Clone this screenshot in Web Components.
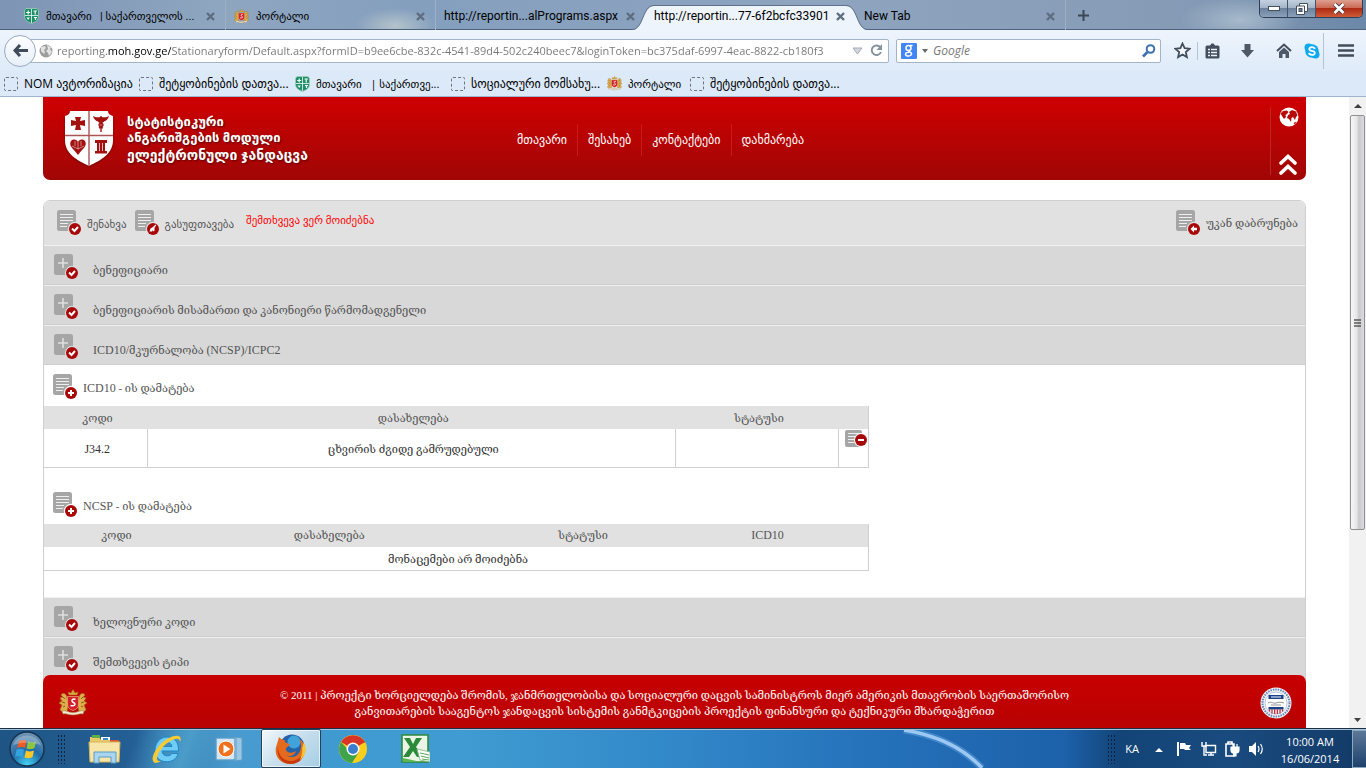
<!DOCTYPE html>
<html lang="ka">
<head>
<meta charset="utf-8">
<title>ელექტრონული ჯანდაცვა</title>
<style>
html, body { height: 100%; }
body { margin: 0; overflow: hidden; background: #fff; font-family: "Open Sans", "DejaVu Sans", sans-serif; }
</style>
</head>
<body>
<desktop-view></desktop-view>
<script>
const define = (name, render) => customElements.define(name, class extends HTMLElement {
  connectedCallback() {
    if (this.shadowRoot) return;
    this.attachShadow({ mode: "open" });
    const t = document.createElement("template");
    t.innerHTML = "<style>*{box-sizing:border-box}:host{box-sizing:border-box}a{color:inherit;text-decoration:none}button{font:inherit;color:inherit;background:none;border:0;padding:0;margin:0;white-space:nowrap}svg{display:block;flex:none}</style>" + render(this);
    this.shadowRoot.append(t.content.cloneNode(true));
  }
});

/* ---- shared pictograms ---- */
const shield = (a, b) => `<svg width="15" height="16" viewBox="0 0 15 16"><path d="M2 .5h11L14.500 2.500V8c0 4-3 6-7 7.500C3.500 14 .5 12 .5 8V2.500z" fill="${a}" stroke="#9fd0bb" stroke-width=".8"/><path d="M7.500 1v14M1 7.500h13" stroke="${b}" stroke-width=".8"/><path d="M4.200 2.500v4M2.200 4.500h4M9.500 3h3.500M11.200 3v3.500M10 9.500h3M11.500 9.500V12" stroke="${b}" stroke-width="1.200"/><path d="M2.500 9.500l1.700 2.500 1.600-2.500z" fill="${b}"/></svg>`;
const emblem = (w) => `<svg width="${w}" height="${w}" viewBox="0 0 28 28"><path d="M10 6L9 3l3 1 2-3.500L16 4l3-1-1 3z" fill="#d9a93c" stroke="#a5731f" stroke-width=".5"/><path d="M8 9C8 5 4 3 2 6l2 2-3 1 2 3-3 2 3 2-2 5 3 2h4l1-6zM20 9c0-4 4-6 6-3l-2 2 3 1-2 3 3 2-3 2 2 5-3 2h-4l-1-6z" fill="#dfae4b" stroke="#a5731f" stroke-width=".7"/><path d="M4 8l2 2M3 13l3 1M4 18l2-1M24 8l-2 2M25 13l-3 1M24 18l-2-1" stroke="#8b5c18"/><path d="M8.500 7.500h11V16c0 3-2.500 4.500-5.500 5.500-3-1-5.500-2.500-5.500-5.500z" fill="#d3202b" stroke="#f0d48a" stroke-width=".6"/><path d="M16.500 10.500c-3-1.500-5 1.500-2 3s1 4-3 3" stroke="#fff" stroke-width="1.500" fill="none"/><path d="M3 22c4-1 6 1.500 11 1.500S21 21 25 22l-1 3c-4-1-5 1-10 1s-6-2-10-1z" fill="#f1ebda" stroke="#a8843e" stroke-width=".6"/></svg>`;

define("desktop-view", () => `
<style>:host{display:grid;grid-template-rows:auto minmax(0,1fr) 40px;height:100vh}
.view{display:flex;min-height:0}site-page{flex:1;min-width:0}</style>
<browser-chrome></browser-chrome>
<div class="view"><site-page></site-page><side-scroll></side-scroll></div>
<task-bar></task-bar>`);

/* ---- browser window ---- */
define("browser-chrome", () => `
<style>:host{display:block;font-size:12px;color:#000}</style>
<tab-strip></tab-strip><nav-bar></nav-bar><bookmark-bar></bookmark-bar>`);

define("browser-tab", () => `
<style>:host{display:flex;align-items:center;width:210px;height:30px;padding:2px 10px 0 8px;gap:7px;font:12px Roboto,"DejaVu Sans",sans-serif;white-space:pre;position:relative;border-left:1px solid #9fb0c4}
:host([active]),:host([after]),:host([first]){border-left-color:transparent}
:host([titled]){font-size:11px}
.shape{display:none;position:absolute;left:-14px;top:5px;width:236px;height:25px}
:host([active]) .shape{display:block}
span,button{position:relative}span{flex:1;min-width:0}</style>
<svg class="shape" viewBox="0 0 236 25" preserveAspectRatio="none"><path d="M0 25C12 25 10 1 22 1h192c12 0 10 24 22 24z" fill="#eef4fb"/><path d="M0 24.500C12 24.500 10 .5 22 .5h192c12 0 10 24 22 24" fill="none" stroke="#5d7189"/></svg>
<slot name="icon"></slot><span><slot></slot></span>
<button aria-label="Close tab"><svg width="9" height="9" viewBox="0 0 9 9"><path d="M1 1l7 7M8 1L1 8" stroke="#5e6d80" stroke-width="2.400"/></svg></button>`);

define("tab-strip", () => `
<style>:host{display:flex;justify-content:space-between;height:30px;border-bottom:1px solid #4c627c;background:radial-gradient(ellipse 40px 18px at 395px 26px,#b3c3ca 0,transparent 100%),radial-gradient(ellipse 60px 24px at 1240px 20px,#a7bacb,transparent),linear-gradient(90deg,#7d94b5 0,#8fa6c0 16%,#849fbe 30%,#8ea4bf 60%,#869bb6 86%,#6c88a8 100%)}
.tabs{display:flex;padding-left:15px}
.new{width:36px;height:30px;display:grid;place-items:center;border-left:1px solid #9fb0c4}
.win{display:flex;height:18px;margin-right:3px;border:1px solid #2e4056;border-top:0;border-radius:0 0 5px 5px;overflow:hidden}
.win button{display:grid;place-items:center;width:28px;background:linear-gradient(#c3d0df,#a5b5c9 45%,#6c819d 50%,#8ba1ba);border-right:1px solid #42556e}
.win .x{width:46px;border:0;background:linear-gradient(#dd9f90,#cc6a55 45%,#ae2a14 50%,#cf5c39)}</style>
<div class="tabs">
<browser-tab first titled><span slot="icon">${shield("#1f8f6a", "#f3fbf7")}</span>მთავარი   | საქართველოს ...</browser-tab>
<browser-tab titled><span slot="icon">${emblem(15)}</span>პორტალი</browser-tab>
<browser-tab>http://reportin...alPrograms.aspx</browser-tab>
<browser-tab active>http://reportin...77-6f2bcfc33901</browser-tab>
<browser-tab after>New Tab</browser-tab>
<button class="new" aria-label="New tab"><svg width="11" height="11" viewBox="0 0 11 11"><path d="M5.500 0v11M0 5.500h11" stroke="#3b4756" stroke-width="2"/></svg></button>
</div>
<div class="win"><button aria-label="Minimize"><svg width="12" height="5" viewBox="0 0 12 5"><rect x=".5" y=".5" width="11" height="4" fill="#fff" stroke="#45505f"/></svg></button><button aria-label="Restore"><svg width="12" height="12" viewBox="0 0 12 12"><path d="M3.500 3V.5h8v8H9" fill="#fff" stroke="#45505f"/><path d="M.5 3h8v8.500h-8z" fill="#fff" stroke="#45505f"/><rect x="3" y="5.500" width="3" height="3" fill="#6c819d" stroke="#45505f"/></svg></button><button class="x" aria-label="Close"><svg width="12" height="11" viewBox="0 0 12 11"><path d="M1.500 1l9 9M10.500 1l-9 9" stroke="#4a3a44" stroke-width="4.400"/><path d="M1.500 1l9 9M10.500 1l-9 9" stroke="#fff" stroke-width="2.600"/></svg></button></div>`);

define("nav-bar", () => `
<style>:host{display:flex;align-items:center;height:41px;padding:0 12px 0 4px;background:linear-gradient(#eef4fc,#deebf9)}
.back{width:32px;height:32px;border-radius:50%;border:1px solid #98abc3;background:linear-gradient(#fcfdff,#e8f0f9);display:grid;place-items:center;margin-right:-14px;z-index:1;flex:none}
.url,.find{display:flex;align-items:center;height:24px;border:1px solid #a3b4c9;background:#fff;border-radius:2px}
.url{flex:1;padding:0 5px 0 16px;gap:4px;min-width:0}
input{border:0;outline:0;padding:0;flex:1;min-width:0;font:12px "Open Sans",sans-serif;background:none;height:20px}
.url input{font-size:11px;-webkit-text-fill-color:transparent;background:linear-gradient(90deg,#757575 51px,#000 51px,#000 114px,#757575 114px);-webkit-background-clip:text;background-clip:text}
.find{width:265px;margin:0 13px 0 7px;padding:0 4px;gap:5px}
.find input{font-style:italic;color:#666}input::placeholder{color:#777;opacity:1}
.tools{display:flex;align-items:center}
i{width:1px;background:#b4c4d8}</style>
<button class="back" aria-label="Back"><svg width="15" height="13" viewBox="0 0 15 13"><path d="M7 1L2 6.500 7 12M2 6.500h13" fill="none" stroke="#3f4b5a" stroke-width="3"/></svg></button>
<div class="url"><svg width="14" height="14" viewBox="0 0 14 14"><circle cx="7" cy="7" r="6.500" fill="#9d9d9d"/><path d="M2 3l4-1 1 2-2 2 1 2-1 2-3-3zM8 1l4 2-1 2 2 3-3 4-1-3-2-2 2-2z" fill="#e2e2e2"/></svg>
<input aria-label="Address" value="reporting.moh.gov.ge/Stationaryform/Default.aspx?formID=b9ee6cbe-832c-4541-89d4-502c240beec7&amp;loginToken=bc375daf-6997-4eac-8822-cb180f3">
<svg width="11" height="8" viewBox="0 0 11 8"><path d="M1 1h9L5.500 7z" fill="#d4d8de" stroke="#a2a9b3"/></svg>
<button aria-label="Reload" style="margin-left:3px"><svg width="13" height="13" viewBox="0 0 13 13"><path d="M10.500 3.500A4.800 4.800 0 1 0 11 8" fill="none" stroke="#8792a0" stroke-width="2"/><path d="M12 0v6H6.500z" fill="#8792a0"/></svg></button></div>
<div class="find"><svg width="16" height="16" viewBox="0 0 16 16"><rect width="16" height="16" rx="1" fill="#4285f4"/><g fill="none" stroke="#fff" stroke-width="1.500"><circle cx="7.500" cy="5" r="2.500"/><path d="M9 2.500h2.500M8 7.500c-1 1 2 1.500 2.500 3 .5 3-6 3.500-6 .8 0-2 2-2 4-2"/></g></svg>
<svg width="6" height="4" viewBox="0 0 6 4"><path d="M0 0h6L3 4z" fill="#6a6a6a"/></svg>
<input aria-label="Search" placeholder="Google"><svg width="14" height="14" viewBox="0 0 14 14"><circle cx="8.500" cy="5" r="3.800" fill="none" stroke="#3c72b0" stroke-width="2"/><path d="M5.500 8L1 12.500" stroke="#3c72b0" stroke-width="2.600"/></svg></div>
<div class="tools">
<button aria-label="Bookmark"><svg width="17" height="17" viewBox="0 0 17 17"><path d="M8.500 1.500l2.100 4.700 5 .5-3.800 3.400 1.100 5-4.400-2.600-4.400 2.600 1.100-5L1.400 6.700l5-.5z" fill="#f4f8fc" stroke="#424e5c" stroke-width="1.800"/></svg></button>
<i style="height:18px;margin:0 7px 0 6px"></i>
<button aria-label="Bookmarks list"><svg width="15" height="16" viewBox="0 0 15 16"><path d="M2 2.500h3L6.500.5h2L10 2.500h3q1.500 0 1.500 1.500v10q0 1.500-1.500 1.500H2Q.5 15.500.5 14V4Q.5 2.500 2 2.500z" fill="#424e5c"/><path d="M3 6.500h2M6 6.500h6M3 9.500h2M6 9.500h6M3 12.500h2M6 12.500h6" stroke="#e8f0f9" stroke-width="1.600"/></svg></button>
<button aria-label="Downloads" style="margin-left:20px"><svg width="15" height="15" viewBox="0 0 15 15"><path d="M4.500 1h6v6H14l-6.500 7.500L1 7h3.500z" fill="#4d5967"/></svg></button>
<button aria-label="Home" style="margin-left:21px"><svg width="16" height="15" viewBox="0 0 16 15"><path d="M1 8l7-6.500L15 8" fill="none" stroke="#424e5c" stroke-width="2"/><path d="M3 9l5-4.500L13 9v6h-3.500v-4h-3v4H3z" fill="#4d5967"/></svg></button>
<button aria-label="Skype" style="margin-left:12px"><svg width="16" height="16" viewBox="0 0 16 16"><circle cx="8" cy="8" r="6.800" fill="#0eaaf0"/><circle cx="4.500" cy="4.500" r="4" fill="#0eaaf0"/><circle cx="11.500" cy="11.500" r="4" fill="#0eaaf0"/><path d="M10.800 6c-.6-2.500-5.600-2.400-5.500.2.100 2.400 5.500 1 5.500 3.700 0 2.700-5.500 2.500-5.700 0" fill="none" stroke="#fff" stroke-width="1.800"/></svg></button>
<i style="height:36px;margin:0 14px 0 3px"></i>
<button aria-label="Menu"><svg width="16" height="13" viewBox="0 0 16 13"><path d="M0 1.500h16M0 6.500h16M0 11.500h16" stroke="#424e5c" stroke-width="2.600"/></svg></button></div>`);

define("book-mark", () => `
<style>:host{display:block}:host([titled]){font-size:11px}a{display:flex;align-items:center;gap:6px;white-space:pre}
.blank{width:14px;height:14px;border:1px dashed #70757c;border-radius:2px}</style>
<a href="#"><slot name="icon"><i class="blank"></i></slot><slot></slot></a>`);

define("bookmark-bar", () => `
<style>:host{display:grid;grid-template-columns:135px 156px 156px 156px 83px 1fr;align-items:center;height:26px;padding-left:4px;font-size:12px;background:#dbe9f8;border-bottom:1px solid #9fb4cf}</style>
<book-mark>NOM ავტორიზაცია</book-mark><book-mark>შეტყობინების დათვა...</book-mark>
<book-mark titled><span slot="icon">${shield("#1f8f6a", "#f3fbf7")}</span>მთავარი   | საქართვე...</book-mark>
<book-mark>სოციალური მომსახუ...</book-mark><book-mark titled><span slot="icon">${emblem(15)}</span>პორტალი</book-mark><book-mark>შეტყობინების დათვა...</book-mark>`);

/* ---- web page ---- */
define("site-page", () => `
<style>:host{display:flex;flex-direction:column;padding:0 43px;background:#fff;font-family:"Liberation Serif","DejaVu Serif",serif;font-size:11px;color:#545454;overflow:hidden}
form-panel{flex:1;min-height:0;margin:20px 0 -6px}</style>
<site-header></site-header><form-panel></form-panel><site-footer></site-footer>`);

define("site-header", () => `
<style>:host{display:grid;grid-template-columns:464px 1fr auto;height:83px;flex:none;background:linear-gradient(#cf0000,#a00606);border-radius:0 0 7px 7px;color:#fff;font-family:"DejaVu Sans",sans-serif}
.brand{display:flex;padding:13px 0 0 21px;gap:13px;font-weight:bold;font-family:"Open Sans","DejaVu Sans",sans-serif;font-size:13px;line-height:16px;text-shadow:1px 1px 2px #5a0000;white-space:nowrap}
.brand div{padding-top:3px}
.brand b{display:block;font-size:14px;line-height:20px}
.brand svg{filter:drop-shadow(0 1px 1px #700)}
nav{display:flex;align-items:center;padding-top:2px;font-family:"Open Sans","DejaVu Sans",sans-serif;font-size:12px}
nav a{padding:0 10px;line-height:32px;border-left:1px solid #c81c1c;white-space:nowrap}nav a:first-child{border:0}
.side{width:36px;margin-top:10px;height:68px;display:flex;flex-direction:column;align-items:center;justify-content:space-between;border-left:1px solid #b92828}</style>
<div class="brand"><svg width="50" height="56" viewBox="0 0 50 56"><path d="M6 1h38c0 3 2 4 5 5v24c0 14-12 20-24 26C13 50 1 44 1 30V6c3-1 5-2 5-5z" fill="#fff"/><path d="M25 1v55M1 25.500h48" stroke="#a55" stroke-width="1.400"/><path d="M11 7h6l-1 4 5-1v6l-5-1 1 5h-6l1-5-5 1v-6l5 1z" fill="#a31010"/><path d="M29 6c3 2 5 1 8 1s5 1 8-1c-1 4-4 6-6 5h-4c-2 1-5-1-6-5z" fill="#a31010"/><path d="M37 6v16M34 11c7 3 6 5 1 7M40 11c-7 3-6 5-1 7" stroke="#a31010" fill="none" stroke-width="1.400"/><path d="M7 31c3-3 6-1 7 1 1-2 4-4 7-1 3 5-3 8-7 14-4-6-10-9-7-14z" fill="#a31010"/><path d="M8 36l6 3 6-3M11 31v5M17 31v5M14 32v7" stroke="#fff" fill="none" stroke-width=".5"/><path d="M31 30h12v3H31zM33 33h8v8h-8zM31 41h12v2.500H31z" fill="#a31010"/><path d="M35.500 33v8M38.500 33v8" stroke="#fff" stroke-width=".7"/></svg>
<div>სტატისტიკური<br>ანგარიშგების მოდული<b>ელექტრონული ჯანდაცვა</b></div></div>
<nav><a href="#">მთავარი</a><a href="#">შესახებ</a><a href="#">კონტაქტები</a><a href="#">დახმარება</a></nav>
<div class="side"><a href="#" aria-label="Language"><svg width="20" height="20" viewBox="0 0 20 20"><circle cx="10" cy="10" r="9.500" fill="#fff"/><path d="M1.500 6.500L4 4l4-.5 1.500 1.500L8 7l-1.500 1L7 10l-2 2-2-3zM9 8l2-1-1-2 3-2 4 1.500 1.500 4L17 10l-1 3-2-3-1.500 1-.5 4-2-3-2-1zM14.500 16l3-1.500-1.500 3z" fill="#b50b0b"/></svg></a>
<a href="#" aria-label="Up"><svg width="20" height="21" viewBox="0 0 20 21"><path d="M2 9l7-6.500L16 9M2 19l7-6.500 7 6.500" fill="none" stroke="#fff" stroke-width="3.600" stroke-linecap="round"/></svg></a></div>`);

const badges = {
  check: '<path d="M15 18.500l2.500 2.500 3.500-4" stroke="#fff" stroke-width="2" fill="none"/>',
  plus: '<path d="M18 16v6M15 19h6" stroke="#fff" stroke-width="2"/>',
  minus: '<path d="M15 19h6" stroke="#fff" stroke-width="2"/>',
  back: '<path d="M14.500 19l3.500-3.500v2.200h3v2.600h-3v2.200z" fill="#fff"/>',
  sweep: '<path d="M14.500 21.500l1-3 2.500-1.500 2.500-2.500.7.7-1.700 2.500v3l-1.500.8v-1.500l-1 1.500z" fill="#fff"/>'
};
define("doc-icon", (el) => `
<style>:host{display:block;flex:none}</style>
<svg width="25" height="26" viewBox="0 0 25 26"><rect width="19" height="21" rx="2.500" fill="#a6a6a6"/>${el.hasAttribute("fold")
    ? '<path d="M9 4v10M4 9h10" stroke="#dedede" stroke-width="1.600"/>'
    : '<path d="M3 4.500h13M3 7.500h13M3 10.500h13M3 13.500h8M3 16.500h7" stroke="#eee"/>'}<circle cx="18" cy="19" r="7.200" fill="${el.getAttribute("halo") || "#d8d8d8"}"/><circle cx="18" cy="19" r="6" fill="#a90808"/>${badges[el.getAttribute("badge")]}</svg>`);

define("form-panel", () => `
<style>:host{display:block;border:1px solid #cfcfcf;border-radius:7px 7px 0 0;background:#fff;overflow:hidden}
.bar{display:flex;align-items:flex-start;height:44px;padding:9px 7px 0 13px;gap:8px;background:#e1e1e1;font-family:"Open Sans","DejaVu Sans",sans-serif}
.bar button{display:flex;align-items:center;gap:5px}
.bar p{margin:0 0 0 4px;color:#f00;line-height:20px}
.bar .r{margin-left:auto;font-family:"Liberation Serif","DejaVu Serif",serif}
.body{padding-bottom:26px}.lat{font-size:12px}</style>
<div class="bar"><button><doc-icon badge="check" halo="#e1e1e1"></doc-icon>შენახვა</button><button><doc-icon badge="sweep" halo="#e1e1e1"></doc-icon>გასუფთავება</button><p>შემთხვევა ვერ მოიძებნა</p><button class="r"><doc-icon badge="back" halo="#e1e1e1"></doc-icon>უკან დაბრუნება</button></div>
<fold-row>ბენეფიციარი</fold-row><fold-row>ბენეფიციარის მისამართი და კანონიერი წარმომადგენელი</fold-row><fold-row><span class="lat">ICD10/</span>მკურნალობა <span class="lat">(NCSP)/ICPC2</span></fold-row>
<div class="body"><code-table kind="icd"></code-table><code-table kind="ncsp"></code-table></div>
<fold-row>ხელოვნური კოდი</fold-row><fold-row>შემთხვევის ტიპი</fold-row>`);

define("fold-row", () => `
<style>:host{display:block;height:40px;background:#d8d8d8;border-top:1px solid #f0f0f0;border-bottom:1px solid #cdcdcd}
button{display:flex;width:100%;padding:8px 10px 0;gap:14px;text-align:left}span{line-height:32px}</style>
<button><doc-icon fold badge="check"></doc-icon><span><slot></slot></span></button>`);

define("code-table", (el) => `
<style>:host{display:block}
.add{display:flex;align-items:flex-start;height:41px;padding:9px 9px 0;gap:5px;line-height:28px}
:host([kind=ncsp]) .add{height:56px;padding-top:24px}
.lat{font-size:12px}
table{width:66%;max-width:825px;table-layout:fixed;border-collapse:collapse;line-height:16px;text-align:center}
th{font-weight:normal;background:#e1e1e1;height:23px;padding:0 0 0 4px}
td{height:38px;padding:2px 0 0 4px;color:#333;border:1px solid #d0d0d0;border-width:0 1px 1px 0}
:host([kind=ncsp]) td{height:24px}
td:last-child{vertical-align:top;padding:0 0 0 6px}
:host([kind=ncsp]) td{vertical-align:middle;padding:1px 0 0 4px}
thead tr{border-right:1px solid #d0d0d0}</style>
${el.getAttribute("kind") === "icd" ? `
<button class="add"><doc-icon badge="plus" halo="#fff"></doc-icon><span><span class="lat">ICD10</span> - ის დამატება</span></button>
<table><colgroup><col style="width:103px"><col><col style="width:163px"><col style="width:30px"></colgroup>
<thead><tr><th>კოდი</th><th>დასახელება</th><th>სტატუსი</th><th></th></tr></thead>
<tbody><tr><td class="lat">J34.2</td><td>ცხვირის ძგიდე გამრუდებული</td><td></td><td><button aria-label="წაშლა"><svg width="23" height="18" viewBox="0 0 23 18"><rect y="1" width="17" height="17" rx="2" fill="#a6a6a6"/><path d="M3 4.500h12M3 7.500h10M3 10.500h8M3 13.500h6" stroke="#eee"/><circle cx="16" cy="11" r="7" fill="#fff"/><circle cx="16" cy="11" r="6" fill="#a90808"/><path d="M13 11h6" stroke="#fff" stroke-width="2"/></svg></button></td></tr></tbody></table>` : `
<button class="add"><doc-icon badge="plus" halo="#fff"></doc-icon><span><span class="lat">NCSP</span> - ის დამატება</span></button>
<table><colgroup><col style="width:141px"><col><col style="width:223px"><col style="width:146px"><col style="width:30px"></colgroup>
<thead><tr><th>კოდი</th><th>დასახელება</th><th>სტატუსი</th><th class="lat">ICD10</th><th></th></tr></thead>
<tbody><tr><td colspan="5">მონაცემები არ მოიძებნა</td></tr></tbody></table>`}`);

define("site-footer", () => `
<style>:host{position:relative;display:grid;grid-template-columns:60px 1fr 60px;align-items:center;justify-items:center;height:53px;flex:none;padding:2px 0 0;background:linear-gradient(#c80000,#b80202);border-radius:7px 7px 0 0;color:#fff;line-height:16px;text-align:center}
p{margin:0}</style>
${emblem(28)}<p>© 2011 | პროექტი ხორციელდება შრომის, ჯანმრთელობისა და სოციალური დაცვის სამინისტროს მიერ ამერიკის მთავრობის საერთაშორისო<br>განვითარების სააგენტოს ჯანდაცვის სისტემის განმტკიცების პროექტის ფინანსური და ტექნიკური მხარდაჭერით</p>
<svg width="32" height="32" viewBox="0 0 32 32"><circle cx="16" cy="16" r="15.500" fill="#eef2f7"/><circle cx="16" cy="16" r="13.500" fill="none" stroke="#6a86b5" stroke-width="2" stroke-dasharray="1.500 1"/><circle cx="16" cy="16" r="11" fill="#fff" stroke="#8fa5c8" stroke-width=".6"/><path d="M8.500 8h15v4h-15z" fill="#1d3f86"/><path d="M11 10h10" stroke="#b9c7e0" stroke-width="1.400"/><path d="M8 16c4-2 5 1 8 0s5-1 8 0M11 18h10" stroke="#777" fill="none" stroke-width=".8"/><path d="M8.500 20h15v2.500h-15z" fill="#1d3f86"/><path d="M9.500 22.500v2M12 22.500v4M14.700 22.500v4.500M17.400 22.500v4.500M20 22.500v4M22.500 22.500v2" stroke="#c22438" stroke-width="1.300"/></svg>`);

define("side-scroll", () => `
<style>:host{display:flex;flex-direction:column;align-items:center;width:17px;flex:none;background:#f1f1f1;padding:6px 0 5px;gap:6px}
.thumb{width:15px;height:415px;border:1px solid #909090;border-radius:2px;background:linear-gradient(90deg,#f6f6f6,#e6e6e6 45%,#c9c9cd 60%,#dcdce0);display:grid;place-items:center}
.dn{margin-top:auto}</style>
<svg width="8" height="6" viewBox="0 0 8 6"><path d="M0 5l4-4 4 4z" fill="#404040"/></svg>
<div class="thumb"><svg width="7" height="8" viewBox="0 0 7 8"><path d="M0 1h7M0 4h7M0 7h7" stroke="#5a5a5a" stroke-width="1.400"/></svg></div>
<svg class="dn" width="7" height="5" viewBox="0 0 7 5"><path d="M0 0h7L3.500 4z" fill="#404040"/></svg>`);

/* ---- desktop task bar ---- */
define("task-bar", () => `
<style>:host{display:flex;align-items:center;position:relative;color:#fff;font-size:11px;line-height:17px;border-top:1px solid #1b2f47;box-shadow:inset 0 1px #a7c3da;
background:linear-gradient(110deg,transparent 10%,#4a9cc9 14%,transparent 17%),linear-gradient(90deg,#1f5585 0,#245f95 10%,#4a9bcf 17%,#3f9ad0 24%,#3f9bd1 34%,#3187c8 50%,#2673bb 63%,#1c61aa 78%,#134478 82%,#1a4b7f 90%,#123a66 100%)}
.glow{position:absolute;left:66%;top:1px}
.apps{display:flex;align-items:center;flex:1;gap:2px;padding-left:8px}
.apps button{display:grid;place-items:center;width:60px;height:39px}
.apps .orb{width:38px}
.grip{width:10px;height:30px;background:radial-gradient(circle,#0a2440 1px,transparent 1px) 0 0/3px 4px}
.apps .grip{margin:0 6px 0 9px}
.on{border:1px solid #23405c;border-radius:2px;background:linear-gradient(135deg,#f3f8fb,#c7deec 50%,#a6cee6);box-shadow:inset 0 0 0 1px #ffffffa0}
.tray{display:flex;align-items:center;flex:none}
.clock{width:84px;text-align:center;white-space:nowrap;padding-top:2px}
.show{width:14px;height:38px;border:1px solid #8fa8c2;border-right:0;background:linear-gradient(#5c7898,#1e426c)}</style>
<svg class="glow" width="90" height="38" viewBox="0 0 90 38" aria-hidden="true"><path d="M2 0q50 8 78 38" fill="none" stroke="#5ea0e0" stroke-width="7" opacity=".5"/><path d="M2 0q50 8 78 38" fill="none" stroke="#9cc8f2" stroke-width="3.500"/></svg>
<div class="apps">
<button class="orb" aria-label="Start"><svg width="36" height="36" viewBox="0 0 36 36"><defs><radialGradient id="o" cx=".5" cy=".95" r=".9"><stop offset="0" stop-color="#45d3f3"/><stop offset=".5" stop-color="#1f6ca8"/><stop offset="1" stop-color="#6e93b3"/></radialGradient></defs><circle cx="18" cy="18" r="17" fill="url(#o)" stroke="#16334f" stroke-width="1.500"/><path d="M10 10c3-1.500 5-1.500 7.500 0L16 17c-3-1.500-5-1-8 0z" fill="#ee5a24"/><path d="M19 10.500c3 1.500 5 1.500 8 0L25.500 17c-3 1.500-5 1.500-8 .500z" fill="#8cc63e"/><path d="M7.500 18.500c3-1.200 5-1 7.500.300L13.500 26c-3-1.500-5-1-7.500 0z" fill="#35a2e0"/><path d="M17 19.500c3 1.500 5 1 8 0L23.500 26c-3 1.500-5 1.500-8 .500z" fill="#fdc728"/><path d="M4 14a15 15 0 0 1 28 0q-14-5-28 0z" fill="#fff" opacity=".25"/></svg></button>
<div class="grip"></div>
<button aria-label="Explorer"><svg width="34" height="30" viewBox="0 0 34 30"><path d="M2 3h9l2 3h17v21H2z" fill="#e8c869"/><path d="M4 1h8v3H4z" fill="#5fb04a"/><path d="M13 3h9v3h-9z" fill="#fff"/><path d="M15 4h5v2h-5z" fill="#3d85c9"/><path d="M22 6h9v3h-9z" fill="#d9562f"/><path d="M1 8h31l-1 20H2z" fill="#f7e6a8" stroke="#d5b65c"/><path d="M6 29V18h22v11h-5v-6H11v6z" fill="#a9d5ee" stroke="#5b9cc6"/></svg></button>
<button aria-label="Internet Explorer"><svg width="32" height="32" viewBox="0 0 32 32"><path d="M16 4c8 0 12 6 11.500 14H11c.5 6 8 6 10 2.500h6C25 32 4 32 4 17.500 4 10 9 4 16 4zm-5 9.500h10c-.5-5.500-9.500-5.500-10 0z" fill="#6fcdf5" stroke="#1f87cc"/><path d="M29 9c3-7-4-8-11-4C8 10 0 22 2 28c1 3 5 2 8 0-7 1-4-9 5-17 6-5 14-8 14-2z" fill="#f7c935"/></svg></button>
<button aria-label="Media Player"><svg width="28" height="26" viewBox="0 0 28 26"><path d="M19 1l8 1v22l-8 1zM1 2h20v22H1z" fill="#9cc7e4" stroke="#5f9cc5"/><rect x="2" y="3" width="17" height="20" fill="#d2e6f3"/><circle cx="11" cy="13" r="8" fill="#f0711d" stroke="#fff"/><path d="M8.500 8.500l7 4.500-7 4.500z" fill="#fff"/></svg></button>
<button class="on" aria-label="Firefox"><svg width="32" height="32" viewBox="0 0 32 32"><circle cx="17" cy="14" r="12.500" fill="#2563a8"/><circle cx="19" cy="9" r="6.500" fill="#3fa3dc"/><path d="M4 4c2 2 3 3 6 3-1 2 1 3 5 4-1 3-5 3-4 6 2 4 7 3 10 1-1 5-7 6-10 4 7 5 15 0 15-9 0-3-1-5-2-7 5 3 7 8 6 13-2 8-8 12-15 12C3 31-2 20 2 11z" fill="#e66a1b"/><path d="M3 14c0 9 7 15 14 14 6-1 10-5 12-9 0 7-6 12-13 12C6 31 1 22 3 14z" fill="#c63a12"/><path d="M30 12c2 6-1 12-5 15 1-4 3-7 2-12 1-1 1-3 1-5z" fill="#fbc52b"/></svg></button>
<button aria-label="Chrome"><svg width="28" height="28" viewBox="0 0 28 28"><circle cx="14" cy="14" r="14" fill="#f9cf1c"/><path d="M14 14L2 7a14 14 0 0 1 24.100 0z" fill="#da3427"/><path d="M2 7a14 14 0 0 0 11 21l7-11-6 3z" fill="#3fa34a"/><path d="M14 7.500h12.300L24 5 14 3z" fill="#da3427"/><circle cx="14" cy="14" r="6.500" fill="#fff"/><circle cx="14" cy="14" r="5" fill="#3b7ed0"/></svg></button>
<button aria-label="Excel"><svg width="29" height="29" viewBox="0 0 29 29"><path d="M1 1h26v27H1z" fill="#eaf5e6" stroke="#2f8a3c" stroke-width="1.600"/><path d="M2 24l18 4H2z" fill="#5ab552"/><path d="M3 4h6l3 6 3-6h6l-6 9 7 10h-6l-4-6-4 6H2l7-10z" fill="#2b8b3b"/><path d="M16 15l13 3v10l-10-2z" fill="#fff" stroke="#7db67a" stroke-width=".8"/><path d="M19 19l9 2M20 22l8 2M21 25l7 1" stroke="#5aa65a"/></svg></button>
</div>
<div class="tray"><div class="grip" style="margin-right:8px"></div><span>KA</span>
<svg width="8" height="5" viewBox="0 0 8 5" style="margin:2px 13px 0 16px"><path d="M0 5l4-4 4 4z" fill="#fff"/></svg>
<svg width="16" height="16" viewBox="0 0 16 16"><path d="M2 1v14" stroke="#fff" stroke-width="2"/><path d="M4 2h5l1 2h5l-2 3 2 2H9L8 8H4z" fill="#fff"/></svg>
<svg width="16" height="16" viewBox="0 0 16 16" style="margin-left:9px"><path d="M5 4.500h9.500v7H5zM7 14h6M10 12v2" fill="none" stroke="#fff" stroke-width="1.400"/><path d="M1 1v4h4V1M3 5v9h3" fill="none" stroke="#fff" stroke-width="1.400"/></svg>
<svg width="16" height="16" viewBox="0 0 16 16" style="margin-left:7px"><path d="M2 3h8v12H2zM4 1h4v2H4z" fill="none" stroke="#fff" stroke-width="1.600"/><path d="M7 6h8v3q0 3-3 3v3h-2v-3q-3 0-3-3zM9 3v3M13 3v3" fill="#fff" stroke="#fff" stroke-width="1.200"/></svg>
<svg width="16" height="16" viewBox="0 0 16 16" style="margin:0 4px 0 8px"><path d="M1 5h3l4-4v14l-4-4H1z" fill="#fff"/><path d="M10 5q2 3 0 6M12.500 3q3.500 5 0 10" stroke="#fff" fill="none" stroke-width="1.200"/></svg>
<div class="clock">10:00 AM<br>16/06/2014</div><button class="show" aria-label="Show desktop"></button></div>`);
</script>
</body>
</html>
